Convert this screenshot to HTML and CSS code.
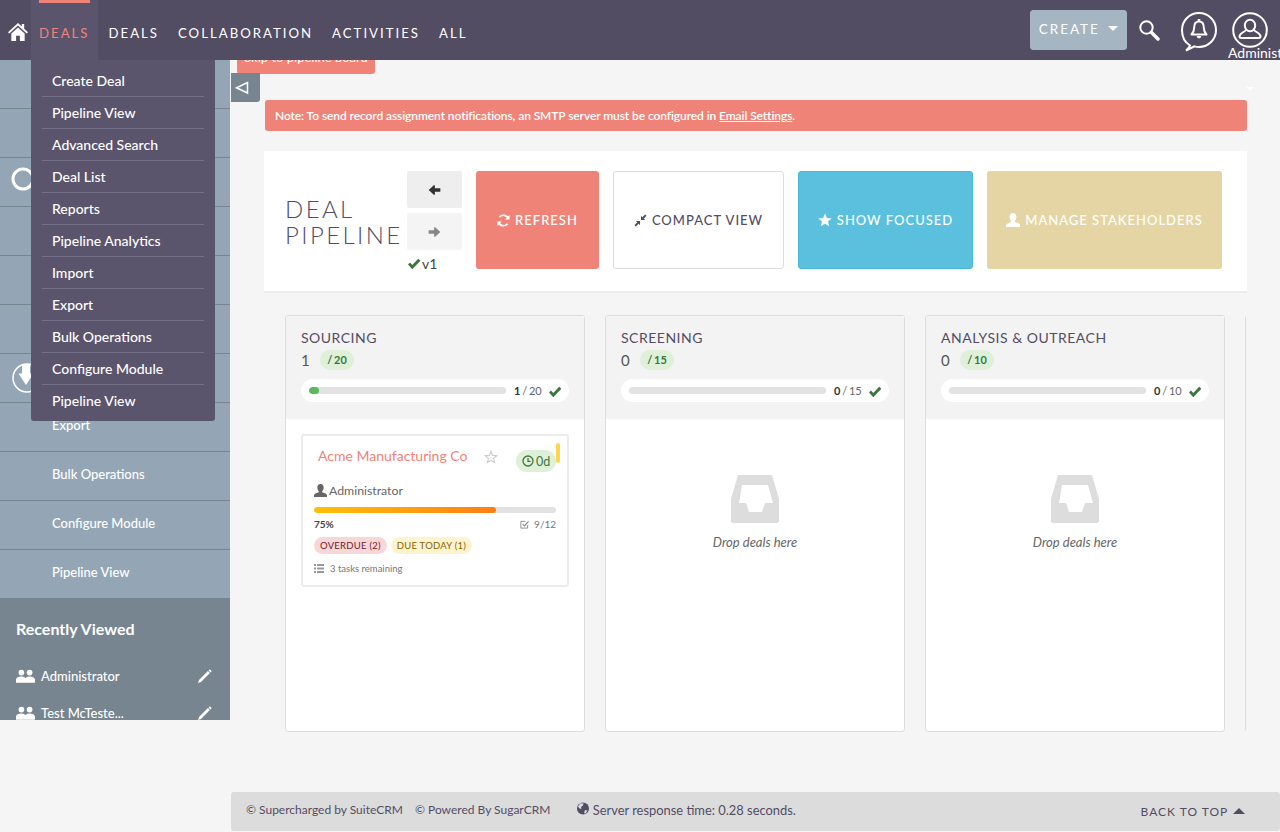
FILE: index.html
```html
<!DOCTYPE html>
<html lang="en">
<head>
  <meta charset="UTF-8">
  <title>Deal Pipeline</title>
  <link rel="stylesheet" href="styles.css">
</head>
<body>
  <svg class="sprite" xmlns="http://www.w3.org/2000/svg">
    <symbol id="i-check" viewBox="0 0 14 12"><path d="M1 6.500 L3 4.600 L5.300 7 L11.200 .8 L13.400 2.800 L5.300 11.200 Z"/></symbol>
    <symbol id="i-user" viewBox="0 0 14 14"><path d="M7 0 C9.300 0 10.400 1.800 10.400 3.800 C10.400 5.600 9.600 7.200 8.800 7.900 L8.800 8.900 C10.600 9.600 13.600 10.300 14 12 L14 14 L0 14 L0 12 C.4 10.300 3.400 9.600 5.200 8.900 L5.200 7.900 C4.400 7.200 3.600 5.600 3.600 3.800 C3.600 1.800 4.700 0 7 0 Z"/></symbol>
    <symbol id="i-star" viewBox="0 0 14 14"><path d="M7 .5 L8.900 5 L13.700 5.400 L10 8.500 L11.200 13.300 L7 10.700 L2.800 13.300 L4 8.500 L.3 5.400 L5.100 5 Z"/></symbol>
    <symbol id="i-group" viewBox="0 0 20 14"><circle cx="5.700" cy="3.400" r="3"/><circle cx="14.300" cy="3.400" r="3"/><path d="M0 14 L0 11 C0 8.500 3 7.400 5.700 7.400 C8.400 7.400 9.400 8.500 10 9.200 C10.600 8.500 11.600 7.400 14.300 7.400 C17 7.400 20 8.500 20 11 L20 14 Z"/></symbol>
    <symbol id="i-pencil" viewBox="0 0 14 14"><path d="M0 14 L1 11 L9.900 2.100 L11.900 4.100 L3 13 Z M10.600 1.400 L11.300 .7 C11.600 .4 12 .4 12.300 .7 L13.300 1.700 C13.600 2 13.600 2.400 13.300 2.700 L12.600 3.400 Z"/></symbol>
    <symbol id="i-inbox" viewBox="0 0 48 48"><path fill-rule="evenodd" d="M7 0 L41 0 L48 24 L48 46 C48 47 47 48 46 48 L2 48 C1 48 0 47 0 46 L0 24 Z M11 10 L8 28 L15 28 L18 37 L31 37 L34 28 L42 28 L37 10 Z"/></symbol>
  </svg>

  <header class="topbar">
    <a class="home" href="#">
      <svg width="20" height="20" viewBox="0 0 21 20"><path fill="#fff" d="M10.500 .5 L14.500 4.200 L14.500 1.500 L17 1.500 L17 6.500 L21 10.300 L19.600 11.600 L10.500 3.300 L1.400 11.600 L0 10.300 Z M3.500 11.700 L10.500 5.300 L17.500 11.700 L17.500 19.500 L12.500 19.500 L12.500 14 L8.500 14 L8.500 19.500 L3.500 19.500 Z"/></svg>
    </a>
    <nav class="nav">
      <a class="nav-item active" href="#">Deals</a>
      <a class="nav-item" href="#">Deals</a>
      <a class="nav-item" href="#">Collaboration</a>
      <a class="nav-item" href="#">Activities</a>
      <a class="nav-item" href="#">All</a>
    </nav>
    <div class="top-tools">
      <button class="create-btn">Create <span class="caret"></span></button>
      <svg class="tool-search" width="22" height="22" viewBox="0 0 22 22"><circle cx="8.500" cy="8.500" r="6.200" fill="none" stroke="#fff" stroke-width="2"/><path d="M13.500 13.500 L20 20" stroke="#fff" stroke-width="3.400" stroke-linecap="round"/></svg>
      <svg class="tool-bell" width="36" height="41" viewBox="0 0 36 41"><path fill="none" stroke="#fff" stroke-width="2" d="M9 34.500 C4 31.500 1 26 1 19 C1 9.500 8.500 2 18 2 C27.500 2 35 9.500 35 19 C35 28.500 27.500 36 18 36 C16.500 36 15 35.800 13.500 35.400 L5 39.500 C7 38 8.500 36.500 9 34.500 Z"/><path fill="none" stroke="#fff" stroke-width="2" stroke-linejoin="round" d="M18 10.500 C21.500 10.500 22.800 13 22.800 16.500 C22.800 20 23.800 21.500 25.500 23.500 L10.500 23.500 C12.200 21.500 13.200 20 13.200 16.500 C13.200 13 14.500 10.500 18 10.500 Z"/><path fill="#fff" d="M15.800 25 L20.200 25 C20.200 26.400 19.200 27.300 18 27.300 C16.800 27.300 15.800 26.400 15.800 25 Z M16.700 8 H19.300 V10.500 H16.700 Z"/></svg>
      <div class="tool-user">
        <svg width="36" height="36" viewBox="0 0 36 36"><circle cx="18" cy="18" r="16.800" fill="none" stroke="#fff" stroke-width="2"/><ellipse cx="18" cy="13.500" rx="5.200" ry="5.800" fill="none" stroke="#fff" stroke-width="2"/><path fill="none" stroke="#fff" stroke-width="2" d="M14 18 C12 20.500 7.500 21 7.500 24.500 C7.500 25.500 8.500 26 9.500 26 L26.500 26 C27.500 26 28.500 25.500 28.500 24.500 C28.500 21 24 20.500 22 18"/></svg>
        <span class="tool-user-name">Administrator</span>
      </div>
    </div>
  </header>

  <ul class="dropdown">
    <li>Create Deal</li>
    <li>Pipeline View</li>
    <li>Advanced Search</li>
    <li>Deal List</li>
    <li>Reports</li>
    <li>Pipeline Analytics</li>
    <li>Import</li>
    <li>Export</li>
    <li>Bulk Operations</li>
    <li>Configure Module</li>
    <li>Pipeline View</li>
  </ul>

  <a class="skip-link" href="#">Skip to pipeline board</a>
  <button class="collapse-btn">
    <svg width="14" height="14" viewBox="0 0 14 14"><path d="M12.500 1.500 L12.500 12 L1.500 6.800 Z" fill="none" stroke="#fff" stroke-width="1.500"/></svg>
  </button>
  <span class="note-caret"></span>

  <div class="layout">
    <aside class="sidebar">
      <ul class="actions">
        <li>Create Deal</li>
        <li>Pipeline View</li>
        <li><svg class="action-icon" width="24" height="24" viewBox="0 0 24 24"><circle cx="12" cy="12" r="10" fill="none" stroke="#fff" stroke-width="3"/></svg>Advanced Search</li>
        <li>Deal List</li>
        <li>Reports</li>
        <li>Pipeline Analytics</li>
        <li><svg class="action-icon import-icon" width="30" height="30" viewBox="0 0 30 30"><circle cx="15" cy="15" r="14" fill="none" stroke="#fff" stroke-width="1.500"/><path fill="#fff" d="M10 1 L18 1 L18 10.500 L21.500 10.500 L14 22 L6.500 10.500 L10 10.500 Z"/></svg>Import</li>
        <li>Export</li>
        <li>Bulk Operations</li>
        <li>Configure Module</li>
        <li>Pipeline View</li>
      </ul>
      <section class="recent">
        <h3>Recently Viewed</h3>
        <div class="recent-row">
          <svg class="recent-icon"><use href="#i-group"/></svg>
          <span>Administrator</span>
          <svg class="recent-edit"><use href="#i-pencil"/></svg>
        </div>
        <div class="recent-row">
          <svg class="recent-icon"><use href="#i-group"/></svg>
          <span>Test McTeste...</span>
          <svg class="recent-edit"><use href="#i-pencil"/></svg>
        </div>
      </section>
    </aside>

    <main class="content">
      <div class="alert">Note: To send record assignment notifications, an SMTP server must be configured in <a href="#">Email Settings</a>.</div>

      <section class="toolbar">
        <h1>Deal<br>Pipeline</h1>
        <div class="stage-nav">
          <button class="arrow-btn">
            <svg width="13" height="10" viewBox="0 0 14 12"><path fill="#333" d="M6.500 0 L7.500 1 L7.500 4 L14 4 L14 8 L7.500 8 L7.500 11 L6.500 12 L0 6 Z"/></svg>
          </button>
          <button class="arrow-btn faded">
            <svg width="13" height="10" viewBox="0 0 14 12"><path fill="#888" d="M7.500 0 L6.500 1 L6.500 4 L0 4 L0 8 L6.500 8 L6.500 11 L7.500 12 L14 6 Z"/></svg>
          </button>
          <div class="version"><svg class="check"><use href="#i-check"/></svg>v1</div>
        </div>
        <button class="big-btn refresh">
          <svg width="13" height="13" viewBox="0 0 14 14"><path fill="none" stroke="#fff" stroke-width="1.800" d="M12.200 5 A5.500 5.500 0 0 0 2.600 3.600 M1.800 9 A5.500 5.500 0 0 0 11.400 10.400"/><path fill="#fff" d="M13.500 1 L13.500 6 L8.800 6 Z M.5 13 L.5 8 L5.200 8 Z"/></svg>
          Refresh
        </button>
        <button class="big-btn compact">
          <svg width="13" height="13" viewBox="0 0 14 14"><path fill="#534d64" d="M7.500 6.500 L7.500 2 L9 3.500 L12 .5 L13.500 2 L10.500 5 L12 6.500 Z M6.500 7.500 L6.500 12 L5 10.500 L2 13.500 L.5 12 L3.500 9 L2 7.500 Z"/></svg>
          Compact View
        </button>
        <button class="big-btn focused">
          <svg class="btn-icon"><use href="#i-star"/></svg>
          Show Focused
        </button>
        <button class="big-btn stakeholders">
          <svg class="btn-icon"><use href="#i-user"/></svg>
          Manage Stakeholders
        </button>
      </section>

      <section class="board">
        <div class="stage">
          <div class="stage-head">
            <h2>Sourcing</h2>
            <div class="stage-count"><span>1</span><span class="limit">/ 20</span></div>
            <div class="wip">
              <div class="wip-bar"><div class="wip-fill" style="width: 5%"></div></div>
              <span class="wip-text"><b>1</b> / 20</span>
              <svg class="check"><use href="#i-check"/></svg>
            </div>
          </div>
          <div class="stage-body">
            <article class="deal">
              <div class="deal-top">
                <a class="deal-name" href="#">Acme Manufacturing Co</a>
                <svg class="deal-star" width="14" height="14" viewBox="0 0 14 14"><path fill="none" stroke="#ccc" stroke-width="1.100" d="M7 1.500 L8.600 5.400 L12.800 5.700 L9.600 8.400 L10.600 12.500 L7 10.300 L3.400 12.500 L4.400 8.400 L1.200 5.700 L5.400 5.400 Z"/></svg>
                <span class="deal-age">
                  <svg width="12" height="12" viewBox="0 0 12 12"><circle cx="6" cy="6" r="5" fill="none" stroke="#3c763d" stroke-width="1.300"/><path d="M6 3 L6 6.300 L8.600 6.300" fill="none" stroke="#3c763d" stroke-width="1.200"/></svg>
                  0d
                </span>
                <span class="deal-flag"></span>
              </div>
              <div class="deal-owner"><svg><use href="#i-user"/></svg>Administrator</div>
              <div class="deal-progress"><div class="deal-progress-fill" style="width: 75%"></div></div>
              <div class="deal-stats">
                <b>75%</b>
                <span>
                  <svg width="9" height="9" viewBox="0 0 10 10"><path fill="none" stroke="#888" stroke-width="1" d="M8.500 5.500 L8.500 9 L1 9 L1 1.500 L6 1.500"/><path fill="none" stroke="#888" stroke-width="1.300" d="M3 4.500 L5 6.500 L9.500 1.500"/></svg>
                  9/12
                </span>
              </div>
              <div class="deal-tags">
                <span class="tag overdue">Overdue (2)</span>
                <span class="tag today">Due Today (1)</span>
              </div>
              <div class="deal-tasks">
                <svg width="10" height="9" viewBox="0 0 10 9"><path fill="#999" d="M0 0 H2 V2 H0 Z M3 0 H10 V2 H3 Z M0 3.500 H2 V5.500 H0 Z M3 3.500 H10 V5.500 H3 Z M0 7 H2 V9 H0 Z M3 7 H10 V9 H3 Z"/></svg>
                3 tasks remaining
              </div>
            </article>
          </div>
        </div>

        <div class="stage">
          <div class="stage-head">
            <h2>Screening</h2>
            <div class="stage-count"><span>0</span><span class="limit">/ 15</span></div>
            <div class="wip">
              <div class="wip-bar"></div>
              <span class="wip-text"><b>0</b> / 15</span>
              <svg class="check"><use href="#i-check"/></svg>
            </div>
          </div>
          <div class="stage-body empty">
            <svg class="empty-icon"><use href="#i-inbox"/></svg>
            <p>Drop deals here</p>
          </div>
        </div>

        <div class="stage">
          <div class="stage-head">
            <h2>Analysis &amp; Outreach</h2>
            <div class="stage-count"><span>0</span><span class="limit">/ 10</span></div>
            <div class="wip">
              <div class="wip-bar"></div>
              <span class="wip-text"><b>0</b> / 10</span>
              <svg class="check"><use href="#i-check"/></svg>
            </div>
          </div>
          <div class="stage-body empty">
            <svg class="empty-icon"><use href="#i-inbox"/></svg>
            <p>Drop deals here</p>
          </div>
        </div>

        <div class="stage"></div>
      </section>
    </main>
  </div>

  <footer class="footer">
    <span class="footer-copy">&copy; Supercharged by SuiteCRM</span>
    <span class="footer-copy">&copy; Powered By SugarCRM</span>
    <span class="footer-time">
      <svg width="12" height="13" viewBox="0 0 12 13"><circle cx="6" cy="6.500" r="6" fill="#534d64"/><path fill="#dcdcdc" d="M3 1.500 L6.500 1.200 L6 3.500 L4 5 L4.500 7 L2.500 6.500 L1 4.500 Z M8 8 L10.500 8.500 L8.500 11.500 L7 11 Z"/></svg>
      Server response time: 0.28 seconds.
    </span>
    <a class="back-top" href="#">Back to top <span class="back-top-arrow"></span></a>
  </footer>
</body>
</html>
```

FILE: styles.css
```css
* {
  box-sizing: border-box;
}
html, body {
  height: 832px;
  overflow: hidden;
}
body {
  margin: 0;
  font-family: Lato, "Open Sans", sans-serif;
  background-color: #f5f5f5;
  color: #534d64;
  position: relative;
}
a {
  color: inherit;
  text-decoration: none;
}
button {
  font-family: inherit;
  cursor: pointer;
}
ul {
  list-style: none;
  margin: 0;
  padding: 0;
}
.sprite {
  display: none;
}

/* top bar */
.topbar {
  position: relative;
  z-index: 3;
  height: 60px;
  display: flex;
  align-items: stretch;
  background-color: #534d64;
}
.home {
  width: 31px;
  padding: 4px 0 0 8px;
  display: flex;
  align-items: center;
}
.nav {
  display: flex;
  gap: 3px;
}
.nav-item {
  position: relative;
  display: flex;
  align-items: center;
  padding: 5px 8px 0;
  font-size: 13.200px;
  letter-spacing: 2px;
  text-transform: uppercase;
  color: #fff;
}
.nav-item.active {
  background-color: #5b546d;
  color: #f08377;
}
.nav-item.active::before {
  content: "";
  position: absolute;
  top: 0;
  left: 8px;
  right: 8px;
  height: 3px;
  background-color: #f08377;
}
.top-tools {
  margin-left: auto;
  display: flex;
  align-items: flex-start;
}
.create-btn {
  margin-top: 10px;
  width: 97px;
  height: 40px;
  padding: 0 0 2px;
  border: 1px solid #a5b5c1;
  border-radius: 3px;
  background-color: #a5b5c1;
  color: #fff;
  font-size: 13.500px;
  letter-spacing: 2px;
  text-transform: uppercase;
}
.caret {
  display: inline-block;
  width: 0;
  height: 0;
  margin-left: 3px;
  vertical-align: 3px;
  border-left: 5px solid transparent;
  border-right: 5px solid transparent;
  border-top: 5px solid #fff;
}
.tool-search {
  margin: 19px 0 0 11px;
}
.tool-bell {
  margin: 11px 0 0 21px;
}
.tool-user {
  width: 52px;
  margin-left: 11px;
  padding-top: 12px;
  overflow: hidden;
  text-align: center;
  height: 60px;
  white-space: nowrap;
}
.tool-user svg {
  display: block;
  margin-left: 4px;
}
.tool-user-name {
  display: block;
  margin-top: -3px;
  color: #fff;
  font-size: 14px;
  line-height: 16px;
  text-align: left;
}

/* modules dropdown */
.dropdown {
  position: absolute;
  z-index: 2;
  top: 60px;
  left: 31px;
  width: 184px;
  height: 361px;
  padding: 5px 11px 0;
  background-color: #5b546d;
  border-radius: 0 0 3px 3px;
}
.dropdown li {
  height: 32px;
  padding-left: 10px;
  line-height: 31px;
  font-size: 14px;
  font-weight: 500;
  color: #fff;
  border-bottom: 1px solid #75708a;
}
.dropdown li:last-child {
  border-bottom: none;
}

/* overlays on the content edge */
.skip-link {
  position: absolute;
  z-index: 1;
  top: 40px;
  left: 237px;
  width: 138px;
  height: 34px;
  padding-top: 9px;
  background-color: #f08377;
  border-radius: 3px;
  color: #fff;
  font-size: 13px;
  line-height: 16px;
  text-align: center;
}
.collapse-btn {
  position: absolute;
  z-index: 1;
  top: 73px;
  left: 231px;
  width: 29px;
  height: 29px;
  padding: 0 0 0 4px;
  border: none;
  border-radius: 0 0 3px 0;
  background-color: #778591;
  display: flex;
  align-items: center;
}
.note-caret {
  position: absolute;
  top: 87px;
  left: 1246px;
  width: 0;
  height: 0;
  border-left: 4px solid transparent;
  border-right: 4px solid transparent;
  border-top: 4px solid #fff;
}

/* page layout */
.layout {
  display: flex;
  align-items: flex-start;
  height: 732px;
}
.sidebar {
  width: 230px;
  height: 660px;
  flex-shrink: 0;
  overflow: hidden;
  background-color: #94a6b5;
}
.actions li {
  position: relative;
  height: 49px;
  padding-left: 52px;
  line-height: 44px;
  font-size: 13px;
  font-weight: 500;
  color: #fff;
  border-bottom: 1px solid #778591;
}
.actions li:last-child {
  height: 48px;
  border-bottom: none;
}
.action-icon {
  position: absolute;
  left: 11px;
  top: 9px;
}
.import-icon {
  left: 12px;
  top: 9px;
}
.recent {
  height: 122px;
  padding: 21px 16px 0;
  background-color: #778591;
  color: #fff;
}
.recent h3 {
  margin: 0 0 18px;
  font-size: 16px;
  font-weight: 700;
  line-height: 20px;
}
.recent-row {
  display: flex;
  align-items: center;
  height: 37px;
  font-size: 13px;
  font-weight: 500;
}
.recent-icon {
  width: 19px;
  height: 14px;
  margin-right: 6px;
  fill: #fff;
}
.recent-edit {
  width: 14px;
  height: 14px;
  margin-left: auto;
  margin-right: 2px;
  fill: #fff;
}

/* main content */
.content {
  width: 1050px;
  padding: 40px 33px 0 34px;
}
.alert {
  height: 31px;
  margin-left: 1px;
  padding: 0 10px;
  line-height: 31px;
  font-size: 12px;
  font-weight: 600;
  letter-spacing: -.09px;
  color: #fff;
  background-color: #f08377;
  border-radius: 3px;
}
.alert a {
  text-decoration: underline;
}
.toolbar {
  display: flex;
  align-items: flex-start;
  height: 142px;
  margin-top: 20px;
  padding: 20px 0 0 21px;
  background-color: #fff;
  border-bottom: 2px solid #ececec;
}
.toolbar h1 {
  width: 122px;
  margin: 25px 0 0;
  font-size: 24px;
  font-weight: 300;
  line-height: 26px;
  letter-spacing: 2.400px;
  text-transform: uppercase;
  color: #534d64;
}
.stage-nav {
  width: 55px;
  margin-right: 14px;
}
.arrow-btn {
  display: flex;
  align-items: center;
  justify-content: center;
  width: 55px;
  height: 37px;
  margin-bottom: 5px;
  padding: 0;
  border: none;
  border-radius: 2px;
  background-color: #eeeeee;
}
.arrow-btn.faded {
  background-color: #f4f4f4;
}
.version {
  display: flex;
  align-items: center;
  margin-top: 2px;
  font-size: 14px;
  line-height: 17px;
  color: #444;
}
.check {
  flex-shrink: 0;
  width: 14px;
  height: 12px;
  margin-right: 1px;
  fill: #3c763d;
}
.big-btn {
  display: flex;
  align-items: center;
  justify-content: center;
  gap: 5px;
  height: 98px;
  margin-right: 14px;
  padding: 0;
  border: 1px solid transparent;
  border-radius: 3px;
  font-size: 13px;
  font-weight: 500;
  letter-spacing: 1px;
  text-transform: uppercase;
  color: #fff;
}
.btn-icon {
  width: 14px;
  height: 14px;
  fill: #fff;
}
.refresh {
  width: 123px;
  background-color: #f08377;
}
.compact {
  width: 171px;
  background-color: #fff;
  border-color: #ddd;
  color: #534d64;
}
.focused {
  width: 175px;
  background-color: #5bc0de;
  border-color: #46b8da;
}
.stakeholders {
  width: 235px;
  margin-right: 0;
  background-color: #e5d5a5;
}

/* board */
.board {
  display: flex;
  gap: 20px;
  width: 961px;
  margin: 22px 0 0 21px;
  overflow: hidden;
}
.stage {
  flex: 0 0 300px;
  height: 417px;
  border: 1px solid #ddd;
  border-radius: 3px;
  background-color: #fff;
}
.stage-head {
  height: 103px;
  padding: 13px 15px 0;
  background-color: #f3f3f3;
}
.stage-head h2 {
  margin: 0;
  font-size: 14px;
  font-weight: 400;
  line-height: 18px;
  letter-spacing: .5px;
  text-transform: uppercase;
  color: #534d64;
}
.stage-count {
  display: flex;
  align-items: center;
  gap: 10px;
  margin-top: 3px;
  font-size: 15px;
  line-height: 20px;
  color: #555;
}
.limit {
  padding: 0 7.500px;
  border-radius: 10px;
  background-color: #dff0d8;
  color: #3c763d;
  font-size: 11px;
  font-weight: 700;
  word-spacing: -1px;
}
.wip {
  display: flex;
  align-items: center;
  height: 23px;
  margin-top: 9px;
  padding: 0 7px 0 8px;
  border-radius: 12px;
  background-color: #fff;
}
.wip-bar {
  flex: 0 0 197px;
  height: 7px;
  margin-top: -1px;
  border-radius: 4px;
  background-color: #e2e2e2;
  overflow: hidden;
}
.wip-fill {
  height: 100%;
  border-radius: 4px;
  background-color: #5cb85c;
}
.wip-text {
  margin-left: 8px;
  font-size: 11px;
  word-spacing: -1px;
  white-space: nowrap;
  color: #666;
}
.wip-text b {
  color: #333;
}
.wip .check {
  margin: 2px 0 0 auto;
}
.stage-body {
  padding: 15px 15px 0;
}
.stage-body.empty {
  padding-top: 56px;
  text-align: center;
}
.empty-icon {
  display: block;
  width: 48px;
  height: 48px;
  margin: 0 auto;
  fill: #dddddd;
}
.empty p {
  margin: 10px 0 0;
  font-size: 13px;
  line-height: 18px;
  font-style: italic;
  color: #666;
}
.deal {
  height: 153px;
  padding: 0 11px;
  border: 2px solid #ececec;
  border-radius: 3px;
  background-color: #fff;
}
.deal-top {
  position: relative;
  height: 45px;
  padding: 9px 0 0 4px;
}
.deal-name {
  font-size: 14px;
  line-height: 20px;
  color: #f08377;
}
.deal-star {
  position: absolute;
  left: 170px;
  top: 14px;
}
.deal-age {
  position: absolute;
  left: 202px;
  top: 14px;
  display: flex;
  align-items: center;
  gap: 2px;
  width: 40px;
  height: 22px;
  padding-left: 6px;
  border-radius: 11px;
  background-color: #dff0d8;
  color: #3c763d;
  font-size: 12.500px;
}
.deal-flag {
  position: absolute;
  left: 242px;
  top: 7px;
  width: 4px;
  height: 20px;
  border-radius: 2px;
  background-color: #ffd54f;
}
.deal-owner {
  display: flex;
  align-items: center;
  gap: 2px;
  height: 18px;
  font-size: 12.300px;
  color: #666;
}
.deal-owner svg {
  width: 13px;
  height: 13px;
  fill: #666;
}
.deal-progress {
  height: 6px;
  margin-top: 8px;
  border-radius: 3px;
  background-color: #e2e2e2;
  overflow: hidden;
}
.deal-progress-fill {
  height: 100%;
  border-radius: 3px;
  background: linear-gradient(90deg, #ffc107, #fd7e14);
}
.deal-stats {
  display: flex;
  justify-content: space-between;
  align-items: center;
  height: 14px;
  margin-top: 4px;
  font-size: 10px;
  color: #777;
}
.deal-stats b {
  color: #444;
}
.deal-stats svg {
  margin-right: 3px;
  vertical-align: -1px;
}
.deal-tags {
  display: flex;
  gap: 4px;
  margin-top: 6px;
}
.tag {
  height: 17px;
  padding: 0 6px;
  line-height: 17px;
  border-radius: 9px;
  font-size: 9.500px;
  letter-spacing: .25px;
  text-transform: uppercase;
}
.overdue {
  background-color: #f8d7da;
  color: #721c24;
}
.today {
  background-color: #fff3cd;
  color: #856404;
}
.deal-tasks {
  display: flex;
  align-items: center;
  gap: 6px;
  height: 14px;
  margin-top: 7px;
  font-size: 9.500px;
  color: #777;
}

/* footer */
.footer {
  display: flex;
  align-items: center;
  height: 39px;
  margin: 0 0 0 231px;
  padding: 0 35px 4px 15px;
  background-color: #dcdcdc;
  border-radius: 3px;
  font-size: 12px;
}
.footer-copy {
  margin-right: 12px;
}
.footer-time {
  margin-left: 15px;
  font-size: 12.900px;
}
.back-top {
  margin-left: auto;
  padding-top: 4px;
  font-size: 12px;
  letter-spacing: 1px;
  text-transform: uppercase;
}
.back-top-arrow {
  display: inline-block;
  width: 0;
  height: 0;
  margin-left: 1px;
  vertical-align: 2px;
  border-left: 6px solid transparent;
  border-right: 6px solid transparent;
  border-bottom: 6px solid #534d64;
}
```
